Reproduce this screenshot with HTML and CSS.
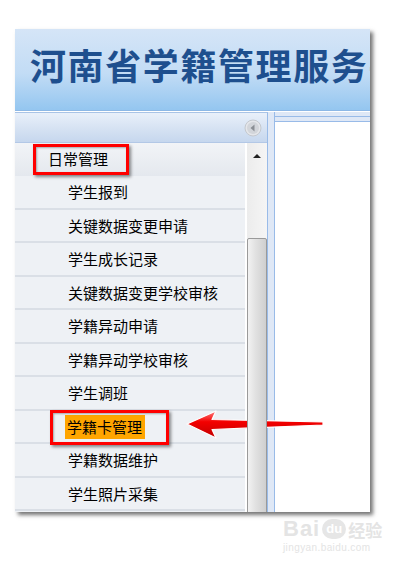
FILE: index.html
```html
<!DOCTYPE html>
<html lang="zh-CN">
<head>
  <meta charset="UTF-8">
  <meta name="viewport" content="width=device-width, initial-scale=1.0">
  <title>河南省学籍管理服务平台</title>
  <link rel="stylesheet" href="styles.css">
</head>
<body>
  <div class="shot">
    <div class="banner">
      <h1>河南省学籍管理服务平台</h1>
    </div>
    <div class="main">
      <div class="west">
        <div class="west-head">
          <span class="collapse">
            <svg width="18" height="18" viewBox="0 0 18 18">
              <circle cx="9" cy="9" r="8" fill="#e4e6ea" stroke="#c4c8ce" stroke-width="1"/>
              <circle cx="9" cy="9" r="6" fill="#d2d5da"/>
              <path d="M10.5 5.5 L6.5 9 L10.5 12.5 Z" fill="#8a8e94"/>
            </svg>
          </span>
        </div>
        <div class="west-body">
          <ul class="menu">
            <li class="group">
              日常管理
              <span class="mark mark-group"></span>
            </li>
            <li>学生报到</li>
            <li>关键数据变更申请</li>
            <li>学生成长记录</li>
            <li>关键数据变更学校审核</li>
            <li>学籍异动申请</li>
            <li>学籍异动学校审核</li>
            <li>学生调班</li>
            <li class="picked">
              <span class="hl">学籍卡管理</span>
              <span class="mark mark-item"></span>
              <svg class="arrow" width="142" height="34" viewBox="0 0 142 34">
                <defs>
                  <linearGradient id="red" x1="0" y1="0" x2="0" y2="1">
                    <stop offset="0" stop-color="#ff8080"/>
                    <stop offset="0.4" stop-color="#f40000"/>
                    <stop offset="1" stop-color="#c00000"/>
                  </linearGradient>
                </defs>
                <path d="M2 16 L31 3 L27 11.5 L138 14 L138 17 L27 21.5 L31 30 Z" fill="url(#red)" stroke="#fff" stroke-width="1.2" stroke-linejoin="round"/>
              </svg>
            </li>
            <li>学籍数据维护</li>
            <li>学生照片采集</li>
          </ul>
          <div class="scroll">
            <span class="up"></span>
            <span class="thumb"></span>
          </div>
        </div>
      </div>
      <div class="split"></div>
      <div class="east">
        <div class="east-body"></div>
      </div>
    </div>
  </div>

  <div class="stamp">
    <div class="logo"><b>Bai</b><span class="paw">du</span><em>经验</em></div>
    <div class="site">jingyan.baidu.com</div>
  </div>
</body>
</html>
```

FILE: styles.css
```css
* {
  box-sizing: border-box;
  padding: 0;
  margin: 0;
}
body {
  background: #fff;
  color: #000;
  font-family: "Noto Sans CJK SC", "Noto Sans", sans-serif;
}

.shot {
  margin: 29px 0 0 15px;
  width: 355px;
  height: 483px;
  overflow: hidden;
  display: flex;
  flex-direction: column;
  box-shadow: 3px 3px 4px rgba(0, 0, 0, 0.55);
}

.banner {
  height: 82px;
  flex: none;
  overflow: hidden;
  white-space: nowrap;
  background: linear-gradient(#d5e5f7, #c2dcf5 55%, #94c6f0);
  border-bottom: 1px solid #8db8e6;
}
.banner h1 {
  margin: 17px 0 0 15px;
  font-size: 36px;
  line-height: 36px;
  font-weight: 700;
  letter-spacing: 1.6px;
  color: #1e4f8e;
}

.main {
  flex: 1;
  display: flex;
  min-height: 0;
  border-top: 1px solid #fff;
  background: #dfe8f6;
}

.west {
  width: 253px;
  display: flex;
  flex-direction: column;
  border-top: 1px solid #a9c3e6;
  border-right: 1px solid #99bbe8;
  background: #fff;
}
.west-head {
  height: 30px;
  flex: none;
  display: flex;
  justify-content: flex-end;
  align-items: center;
  padding-right: 5px;
  background: linear-gradient(#e9f0fa, #d7e3f3 50%, #c6d7ee);
  border-bottom: 1px solid #b3c8e6;
}
.collapse {
  display: flex;
}

.west-body {
  flex: 1;
  display: flex;
  min-height: 0;
}

.menu {
  flex: 1;
  list-style: none;
  background: #eef1f5;
  margin-right: 2px;
  font-size: 15px;
}
.menu li {
  position: relative;
  height: 33.5px;
  line-height: 32px;
  padding-left: 53px;
  border-bottom: 2px solid #dadfe6;
}
.menu li.group {
  height: 33px;
  padding-left: 33px;
  background: linear-gradient(#f2f4f7, #e4e8ee);
  border-bottom: none;
}

.hl {
  background: #ffa500;
  padding: 1px 3px 2px 2px;
  margin-left: -3px;
}

.mark {
  position: absolute;
  border: 3px solid #ff0000;
  box-shadow: 2px 2px 3px rgba(0, 0, 0, 0.45), inset 1px 1px 2px rgba(0, 0, 0, 0.3);
}
.mark-group {
  left: 18px;
  top: 1px;
  width: 96px;
  height: 31px;
}
.mark-item {
  left: 35px;
  top: -1px;
  width: 119px;
  height: 35px;
}
.arrow {
  position: absolute;
  left: 170px;
  top: -3px;
}

.scroll {
  width: 20px;
  flex: none;
  position: relative;
  background: linear-gradient(90deg, #ececec, #f5f5f5);
}
.up {
  position: absolute;
  left: 6px;
  top: 11px;
  border-left: 4px solid transparent;
  border-right: 4px solid transparent;
  border-bottom: 4px solid #222;
}
.thumb {
  position: absolute;
  left: 0;
  right: 0;
  top: 95px;
  bottom: -4px;
  border: 1px solid #9a9a9a;
  border-radius: 2px;
  background: linear-gradient(90deg, #f2f2f2, #e2e2e2 40%, #cfcfcf);
}

.split {
  width: 7px;
  flex: none;
  background: #dfe8f6;
  border-right: 1px solid #99bbe8;
}

.east {
  flex: 1;
  padding-top: 4px;
  background: #dfe8f6;
}
.east-body {
  height: 100%;
  background: #fff;
  border-top: 1px solid #99bbe8;
  padding-top: 3px;
  box-shadow: inset 0 4px 0 #dfe8f6, inset 0 5px 0 #99bbe8;
}

.stamp {
  margin: 6px 0 0 283px;
  color: #e4e4e4;
  font-family: "Liberation Sans", Arial, sans-serif;
}
.logo {
  display: flex;
  align-items: center;
  gap: 2px;
  height: 22px;
}
.logo b {
  font-size: 22px;
  letter-spacing: 1px;
}
.paw {
  display: inline-block;
  width: 24px;
  height: 20px;
  border-radius: 10px;
  background: #e6e6e6;
  color: #fff;
  font-size: 13px;
  font-weight: bold;
  line-height: 20px;
  text-align: center;
}
.logo em {
  font-style: normal;
  font-size: 17px;
  font-weight: bold;
  font-family: "Noto Sans CJK SC", sans-serif;
}
.site {
  font-size: 10px;
  letter-spacing: 0.4px;
  margin-top: 2px;
}
```
